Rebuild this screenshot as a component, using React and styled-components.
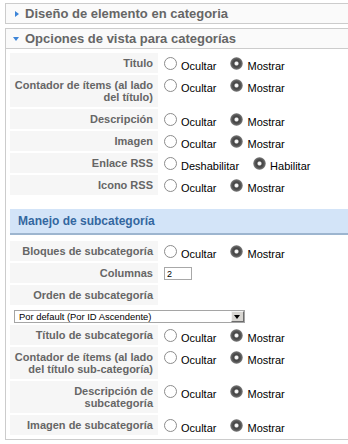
import styled, { createGlobalStyle } from "styled-components";

const GlobalStyle = createGlobalStyle`
  html, body {
    margin: 0;
    padding: 0;
    background: #fff;
    overflow: hidden;
  }
  body {
    font-family: "Liberation Sans", Arial, sans-serif;
    font-size: 11px;
    color: #000;
  }
`;

const Page = styled.div`
  width: 348px;
  box-sizing: border-box;
  padding: 3px 0 0 5px;
`;

// the panels run on past the right edge, so no right border shows
const Panel = styled.div`
  border: 1px solid #cccccc;
  border-right: none;
  margin-bottom: 4px;
  background: #fff;
`;

const PanelTitle = styled.h3`
  margin: 0;
  padding: 2px 0 2px 19px;
  font-size: 13px;
  line-height: 15px;
  font-weight: bold;
  color: #666;
  background: #fafafa;
  position: relative;
  border-bottom: ${(p) => (p.open ? "1px solid #cccccc" : "none")};

  &::before {
    content: "";
    position: absolute;
    ${(p) =>
      p.open
        ? `left: 7px; top: 8px;
           border-left: 3.5px solid transparent;
           border-right: 3.5px solid transparent;
           border-top: 4px solid #3d85d8;`
        : `left: 9px; top: 7px;
           border-top: 3px solid transparent;
           border-bottom: 3px solid transparent;
           border-left: 4px solid #3d85d8;`}
  }
`;

const PanelBody = styled.div`
  padding: 4px 0 4px 4px;
`;

const ParamList = styled.div`
  display: grid;
  grid-template-columns: 148px 1fr;
  gap: 2px;
`;

const Key = styled.div`
  background: #f6f6f6;
  color: #666;
  font-weight: bold;
  font-size: 11px;
  line-height: 12px;
  text-align: right;
  padding: 4px 5px 4px 3px;
  white-space: nowrap;
`;

const Value = styled.div`
  display: flex;
  align-items: flex-start;
  padding: 4px 0 0 4px;
`;

const FullRow = styled.div`
  grid-column: 1 / -1;
  padding: 3px 0 0 4px;
`;

const Option = styled.label`
  display: inline-flex;
  align-items: flex-start;
  margin-left: ${(p) => (p.first ? "0" : "14px")};
`;

const Radio = styled.input.attrs({ type: "radio" })`
  appearance: none;
  -webkit-appearance: none;
  margin: 0;
  width: 13px;
  height: 13px;
  border-radius: 50%;
  box-sizing: border-box;
  border: 1px solid #8c8c8c;
  background: #fff;
  flex: none;

  &:checked {
    border: none;
    background: radial-gradient(
      circle at 50% 50%,
      #ffffff 0,
      #f0f0f0 1.4px,
      #444444 2.6px,
      #505050 4.2px,
      #6e6e6e 5.6px,
      #b0b0b0 6.3px,
      rgba(255, 255, 255, 0) 6.9px
    );
  }
`;

const OptionText = styled.span`
  margin: 3px 0 0 4px;
  font-size: 11px;
  line-height: 13px;
  color: #000;
`;

const SubHeader = styled.h4`
  margin: 14px 0 6px;
  padding: 0 0 0 8px;
  height: 24px;
  line-height: 25px;
  background: #d3e4f8;
  border-bottom: 2px solid #9db5cf;
  color: #33679f;
  font-size: 12px;
  font-weight: bold;
`;

const SmallInput = styled.input`
  width: 28px;
  height: 13px;
  box-sizing: border-box;
  margin: 0;
  border: 1px solid #a8a8a8;
  padding: 0 2px;
  font-family: "Liberation Sans", Arial, sans-serif;
  font-size: 9px;
  line-height: 11px;
  color: #000;
  outline: none;
`;

const SelectWrap = styled.div`
  position: relative;
  width: 231px;
  height: 13px;
`;

const Select = styled.select`
  appearance: none;
  -webkit-appearance: none;
  width: 100%;
  height: 13px;
  box-sizing: border-box;
  margin: 0;
  border: 1px solid #a5a5a5;
  border-radius: 0;
  padding: 0 0 0 4px;
  background: #fff;
  font-family: "Liberation Sans", Arial, sans-serif;
  font-size: 9.4px;
  line-height: 11px;
  color: #000;
  outline: none;
`;

const ArrowButton = styled.span`
  position: absolute;
  right: 1px;
  top: 1px;
  width: 13px;
  height: 11px;
  box-sizing: border-box;
  background: #d8d6d2;
  border-top: 1px solid #f4f4f4;
  border-left: 1px solid #f4f4f4;
  border-right: 1px solid #6c6c6c;
  border-bottom: 1px solid #6c6c6c;
  pointer-events: none;

  &::after {
    content: "";
    position: absolute;
    left: 2px;
    top: 3px;
    border-left: 3.5px solid transparent;
    border-right: 3.5px solid transparent;
    border-top: 4px solid #000;
  }
`;

const RadioPair = ({ name, off = "Ocultar", on = "Mostrar" }) => (
  <Value>
    <Option first>
      <Radio name={name} value="0" />
      <OptionText>{off}</OptionText>
    </Option>
    <Option>
      <Radio name={name} value="1" defaultChecked />
      <OptionText>{on}</OptionText>
    </Option>
  </Value>
);

const App = () => {
  return (
    <Page>
      <GlobalStyle />
      <Panel>
        <PanelTitle>Diseño de elemento en categoria</PanelTitle>
      </Panel>
      <Panel>
        <PanelTitle open>Opciones de vista para categorías</PanelTitle>
        <PanelBody>
          <ParamList>
            <Key>Titulo</Key>
            <RadioPair name="catTitle" />
            <Key>
              Contador de ítems (al lado
              <br />
              del título)
            </Key>
            <RadioPair name="catTitleItemCounter" />
            <Key>Descripción</Key>
            <RadioPair name="catDescription" />
            <Key>Imagen</Key>
            <RadioPair name="catImage" />
            <Key>Enlace RSS</Key>
            <RadioPair name="catFeedLink" off="Deshabilitar" on="Habilitar" />
            <Key>Icono RSS</Key>
            <RadioPair name="catFeedIcon" />
          </ParamList>

          <SubHeader>Manejo de subcategoría</SubHeader>

          <ParamList>
            <Key>Bloques de subcategoría</Key>
            <RadioPair name="subCategories" />
            <Key>Columnas</Key>
            <Value>
              <SmallInput defaultValue="2" />
            </Value>
            <Key>Orden de subcategoría</Key>
            <Value />
            <FullRow>
              <SelectWrap>
                <Select defaultValue="id">
                  <option value="id">Por default (Por ID Ascendente)</option>
                  <option value="name">Alfabético</option>
                </Select>
                <ArrowButton />
              </SelectWrap>
            </FullRow>
            <Key>Título de subcategoría</Key>
            <RadioPair name="subCatTitle" />
            <Key>
              Contador de ítems (al lado
              <br />
              del título sub-categoría)
            </Key>
            <RadioPair name="subCatTitleItemCounter" />
            <Key>
              Descripción de
              <br />
              subcategoría
            </Key>
            <RadioPair name="subCatDescription" />
            <Key>Imagen de subcategoría</Key>
            <RadioPair name="subCatImage" />
          </ParamList>
        </PanelBody>
      </Panel>
    </Page>
  );
};

export default App;
